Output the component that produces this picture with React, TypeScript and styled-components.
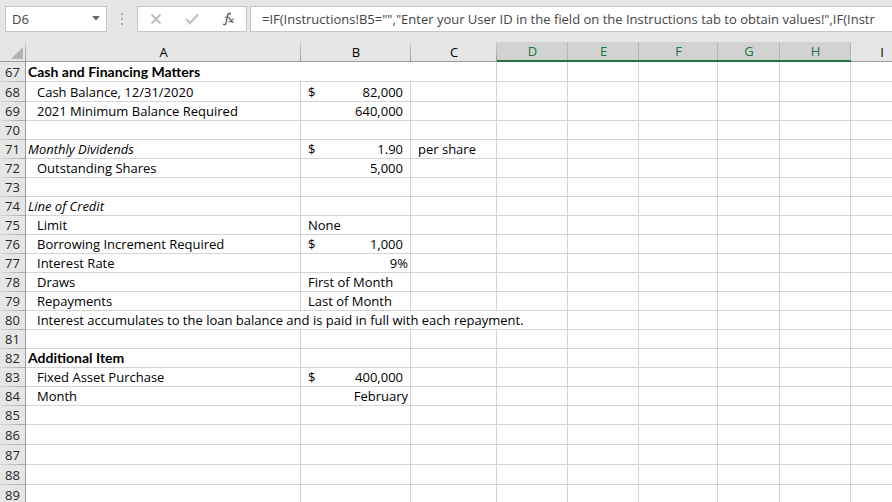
import React from "react";
import styled, { createGlobalStyle, css } from "styled-components";

const GlobalStyle = createGlobalStyle`
  *, *::before, *::after { box-sizing: border-box; }
  html, body { margin: 0; height: 100%; overflow: hidden; background: #fff; }
  #root { height: 100%; }
  body, input, button, table {
    font-family: "Open Sans", "Noto Sans", "Liberation Sans", sans-serif;
    font-size: 13px;
    line-height: 18px;
    color: #000;
  }
`;

const LINE = "#d4d4d4";
const EDGE = "#9b9b9b";
const CHROME = "#e6e6e6";
const GREEN = "#217346";

const Workbook = styled.main`
  display: flex;
  flex-direction: column;
  height: 100%;
  overflow: hidden;
`;

const FormulaBar = styled.header`
  flex: none;
  display: flex;
  align-items: center;
  padding: 6px 0 10px 5px;
  background: ${CHROME};
`;

const boxed = css`
  display: flex;
  align-items: center;
  height: 26px;
  background: #fff;
  border: 1px solid #c6c6c6;
`;

const NameBox = styled.div`
  ${boxed}
  width: 102px;
`;

const TextInput = styled.input`
  flex: 1;
  min-width: 0;
  height: 24px;
  padding: 0 0 0 6px;
  border: 0;
  outline: 0;
  background: transparent;
  color: #444;
`;

const IconButton = styled.button<{ $width: number }>`
  display: flex;
  align-items: center;
  justify-content: center;
  width: ${(p) => p.$width}px;
  height: 24px;
  padding: 0;
  border: 0;
  background: transparent;
`;

const Grip = styled.div`
  display: flex;
  flex-direction: column;
  align-items: center;
  gap: 3px;
  width: 30px;
`;

const Dot = styled.i`
  width: 2px;
  height: 2px;
  background: #ababab;
`;

const Actions = styled.div`
  ${boxed}
  width: 110px;
  margin-right: 3px;
`;

const FormulaBox = styled.div`
  ${boxed}
  flex: 1;
  min-width: 0;
  border-right: 0;
  padding-left: 5px;
`;

const Sheet = styled.div`
  flex: 1;
  min-height: 0;
  overflow: hidden;
`;

const Grid = styled.table`
  width: 100%;
  table-layout: fixed;
  border-collapse: separate;
  border-spacing: 0;
`;

const Col = styled.col<{ $width: number }>`
  width: ${(p) => p.$width}px;
`;

const ColumnHead = styled.th<{ $selected?: boolean }>`
  height: 20px;
  padding: 0;
  font-weight: 400;
  text-align: center;
  color: ${(p) => (p.$selected ? GREEN : "#000")};
  border-bottom: ${(p) => (p.$selected ? `2px solid ${GREEN}` : `1px solid ${EDGE}`)};
  background:
    linear-gradient(${(p) => (p.$selected ? "#b4b4b4, #b4b4b4" : `#cfcfcf, ${EDGE}`)}) right / 1px 100% no-repeat
    ${(p) => (p.$selected ? "#d2d2d2" : CHROME)};
`;

const Corner = styled(ColumnHead)`
  svg { display: block; margin: 3px 3px 0 auto; }
`;

const Row = styled.tr<{ $height: number }>`
  height: ${(p) => p.$height}px;
`;

const RowHead = styled.th`
  padding: 0 0 1px;
  font-weight: 400;
  text-align: center;
  color: #262626;
  border-right: 1px solid ${EDGE};
  background: linear-gradient(90deg, #dadada, #a6a6a6) bottom / 100% 1px no-repeat ${CHROME};
`;

type Look = "heading" | "italic" | "indent" | "inset" | "number" | "money" | "right";

const looks: Record<Look, ReturnType<typeof css>> = {
  heading: css`
    font-family: Lato, "Open Sans", sans-serif;
    font-size: 14px;
    font-weight: 700;
  `,
  italic: css`
    font-style: italic;
  `,
  indent: css`
    padding-left: 11px;
  `,
  inset: css`
    padding-left: 7px;
  `,
  right: css`
    text-align: right;
  `,
  number: css`
    padding: 0 7px;
    text-align: right;
  `,
  money: css`
    padding: 0 7px;
  `,
};

const Cell = styled.td<{ $look?: Look }>`
  padding: 0 2px;
  white-space: nowrap;
  border-right: 1px solid ${LINE};
  border-bottom: 1px solid ${LINE};
  ${(p) => p.$look && looks[p.$look]}
`;

const Money = styled.div`
  display: flex;
  justify-content: space-between;
`;

const columns = [
  { name: "A", width: 275 },
  { name: "B", width: 110 },
  { name: "C", width: 86 },
  { name: "D", width: 71, selected: true },
  { name: "E", width: 71, selected: true },
  { name: "F", width: 79, selected: true },
  { name: "G", width: 62, selected: true },
  { name: "H", width: 71, selected: true },
  { name: "I", width: 62 },
];

type CellData = { text: string; look?: Look; span?: number };
type RowData = { height?: number; cells?: CellData[] };

const rows: RowData[] = [
  { height: 20, cells: [{ text: "Cash and Financing Matters", look: "heading", span: 3 }] },
  { height: 20, cells: [{ text: "Cash Balance, 12/31/2020", look: "indent" }, { text: "82,000", look: "money" }] },
  { cells: [{ text: "2021 Minimum Balance Required", look: "indent" }, { text: "640,000", look: "number" }] },
  {},
  {
    cells: [
      { text: "Monthly Dividends", look: "italic" },
      { text: "1.90", look: "money" },
      { text: "per share", look: "inset" },
    ],
  },
  { cells: [{ text: "Outstanding Shares", look: "indent" }, { text: "5,000", look: "number" }] },
  {},
  { cells: [{ text: "Line of Credit", look: "italic" }] },
  { cells: [{ text: "Limit", look: "indent" }, { text: "None", look: "inset" }] },
  { cells: [{ text: "Borrowing Increment Required", look: "indent" }, { text: "1,000", look: "money" }] },
  { cells: [{ text: "Interest Rate", look: "indent" }, { text: "9%", look: "right" }] },
  { cells: [{ text: "Draws", look: "indent" }, { text: "First of Month", look: "inset" }] },
  { cells: [{ text: "Repayments", look: "indent" }, { text: "Last of Month", look: "inset" }] },
  {
    cells: [
      {
        text: "Interest accumulates to the loan balance and is paid in full with each repayment.",
        look: "indent",
        span: 4,
      },
    ],
  },
  {},
  { cells: [{ text: "Additional Item", look: "heading" }] },
  { cells: [{ text: "Fixed Asset Purchase", look: "indent" }, { text: "400,000", look: "money" }] },
  { cells: [{ text: "Month", look: "indent" }, { text: "February", look: "right" }] },
  {},
  { height: 20 },
  { height: 20 },
  { height: 20 },
  { height: 20 },
];

function SheetRow({ number, row }: { number: number; row: RowData }) {
  const cells = row.cells ?? [];
  const used = cells.reduce((sum, c) => sum + (c.span ?? 1), 0);
  return (
    <Row $height={row.height ?? 19}>
      <RowHead scope="row">{number}</RowHead>
      {cells.map((c, i) => (
        <Cell key={i} $look={c.look} colSpan={c.span}>
          {c.look === "money" ? (
            <Money>
              <span>$</span>
              <span>{c.text}</span>
            </Money>
          ) : (
            c.text
          )}
        </Cell>
      ))}
      {columns.slice(used).map((c) => (
        <Cell key={c.name} />
      ))}
    </Row>
  );
}

export default function App() {
  return (
    <Workbook>
      <GlobalStyle />
      <FormulaBar>
        <NameBox>
          <TextInput aria-label="Name box" defaultValue="D6" />
          <IconButton $width={20} aria-label="Show names">
            <svg width="8" height="6" viewBox="0 0 8 6">
              <path d="M0 0h8L4 4.5z" fill="#6a6a6a" />
            </svg>
          </IconButton>
        </NameBox>
        <Grip>
          <Dot />
          <Dot />
          <Dot />
        </Grip>
        <Actions>
          <IconButton $width={36} aria-label="Cancel">
            <svg width="12" height="12" viewBox="0 0 12 12">
              <path d="M1.5 1.5l9 9M10.5 1.5l-9 9" stroke="#bdbdbd" strokeWidth="1.8" fill="none" />
            </svg>
          </IconButton>
          <IconButton $width={36} aria-label="Enter">
            <svg width="14" height="12" viewBox="0 0 14 12">
              <path d="M1 6.2l4 3.8L13 1.5" stroke="#c2c2c2" strokeWidth="2.3" fill="none" />
            </svg>
          </IconButton>
          <IconButton $width={36} aria-label="Insert function">
            <svg width="13" height="14" viewBox="0 0 13 14" fill="none" stroke="#666" strokeLinecap="round">
              <path d="M8.4 2C7.4.8 6 1.4 5.6 3.4L4 10.8c-.3 1.6-1.2 2.3-2.4 1.6" strokeWidth="1.5" />
              <path d="M3.4 5.2h4" strokeWidth="1.1" />
              <path d="M7.2 7c1-.6 1.5.2 1.8 1.3s.7 2.2 2 1.5" strokeWidth="1.4" />
              <path d="M11.8 7c-1.4-.3-3 3.2-4.8 3" strokeWidth="1.1" />
            </svg>
          </IconButton>
        </Actions>
        <FormulaBox>
          <TextInput
            aria-label="Formula"
            defaultValue={'=IF(Instructions!B5="","Enter your User ID in the field on the Instructions tab to obtain values!",IF(Instr'}
          />
        </FormulaBox>
      </FormulaBar>
      <Sheet>
        <Grid>
          <colgroup>
            <Col $width={26} />
            {columns.map((c) => (
              <Col key={c.name} $width={c.width} />
            ))}
          </colgroup>
          <thead>
            <tr>
              <Corner aria-label="Select all">
                <svg width="12" height="12" viewBox="0 0 12 12">
                  <path d="M12 0v12H0z" fill="#b3b3b3" />
                </svg>
              </Corner>
              {columns.map((c) => (
                <ColumnHead key={c.name} scope="col" $selected={c.selected}>
                  {c.name}
                </ColumnHead>
              ))}
            </tr>
          </thead>
          <tbody>
            {rows.map((row, i) => (
              <SheetRow key={i} number={67 + i} row={row} />
            ))}
          </tbody>
        </Grid>
      </Sheet>
    </Workbook>
  );
}
